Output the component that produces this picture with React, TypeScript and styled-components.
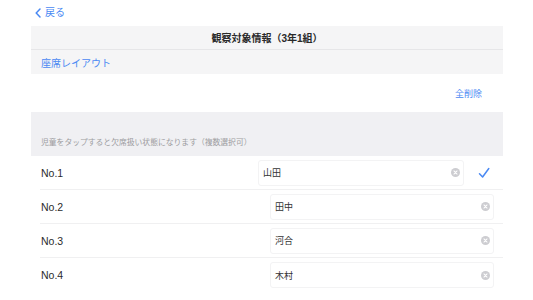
import * as React from 'react';
import styled, { createGlobalStyle } from 'styled-components';

const GlobalStyle = createGlobalStyle`
  html, body {
    margin: 0;
    padding: 0;
    background: #ffffff;
  }
  body {
    font-family: 'Liberation Sans', 'Noto Sans CJK JP', sans-serif;
    color: #2b2b2b;
  }
`;

const BLUE = '#4a89f3';

const Page = styled.div`
  width: 533px;
  height: 300px;
  overflow: hidden;
  display: flex;
  flex-direction: column;
`;

const TopBar = styled.div`
  height: 26px;
  display: flex;
  align-items: center;
  padding-left: 35px;
`;

const BackLink = styled.div`
  display: flex;
  align-items: center;
  gap: 4px;
  color: ${BLUE};
  font-size: 10px;
  line-height: 1;
`;

const Panel = styled.div`
  margin: 0 30px 0 31px;
  display: flex;
  flex-direction: column;
`;

const NavBar = styled.div`
  height: 23px;
  background: #f5f5f6;
  border-bottom: 1px solid #e6e6e8;
  display: flex;
  align-items: center;
  justify-content: center;
  font-size: 10px;
  font-weight: bold;
  color: #2a2a2a;
`;

const LayoutRow = styled.div`
  height: 24px;
  background: #f5f5f6;
  display: flex;
  align-items: center;
  padding-left: 10px;
  font-size: 10px;
  color: ${BLUE};
`;

const ActionRow = styled.div`
  height: 38px;
  display: flex;
  align-items: center;
  justify-content: flex-end;
  padding-right: 21px;
  font-size: 9px;
  color: ${BLUE};
`;

const SectionHeader = styled.div`
  height: 44px;
  background: #f0f0f3;
  display: flex;
  align-items: flex-end;
  padding: 0 0 9px 10px;
  box-sizing: border-box;
  font-size: 7.8px;
  color: #9d9da1;
`;

const Row = styled.div<{ $last?: boolean }>`
  height: 34px;
  display: flex;
  align-items: center;
  margin-left: 9px;
  border-bottom: ${(p) => (p.$last ? 'none' : '1px solid #f0f0f1')};
  box-sizing: border-box;
`;

const Label = styled.div`
  flex: 1;
  font-size: 10.5px;
  color: #2b2b2b;
  padding-left: 1px;
`;

const Field = styled.div<{ $width: number }>`
  width: ${(p) => p.$width}px;
  height: 26px;
  box-sizing: border-box;
  border: 1px solid #f3f3f4;
  border-radius: 3px;
  display: flex;
  align-items: center;
  justify-content: space-between;
  padding: 0 3px 0 4px;
  font-size: 9px;
  color: #333333;
`;

const Accessory = styled.div<{ $width: number }>`
  width: ${(p) => p.$width}px;
  display: flex;
  align-items: center;
  justify-content: center;
`;

function ClearIcon() {
  return (
    <svg width="9" height="9" viewBox="0 0 10 10">
      <circle cx="5" cy="5" r="5" fill="#cdcdd1" />
      <path d="M3.3 3.3 L6.7 6.7 M6.7 3.3 L3.3 6.7" stroke="#ffffff" strokeWidth="1.2" strokeLinecap="round" />
    </svg>
  );
}

function CheckIcon() {
  return (
    <svg width="12" height="12" viewBox="0 0 12 12">
      <path d="M1.5 6.8 L4.6 10 L10.8 1.5" fill="none" stroke={BLUE} strokeWidth="1.5" strokeLinecap="round" strokeLinejoin="round" />
    </svg>
  );
}

function Chevron() {
  return (
    <svg width="6" height="10" viewBox="0 0 6 10">
      <path d="M5 1 L1.2 5 L5 9" fill="none" stroke={BLUE} strokeWidth="1.5" strokeLinecap="round" strokeLinejoin="round" />
    </svg>
  );
}

const students = [
  { no: 'No.1', name: '山田', selected: true },
  { no: 'No.2', name: '田中', selected: false },
  { no: 'No.3', name: '河合', selected: false },
  { no: 'No.4', name: '木村', selected: false },
];

export default function App() {
  return (
    <Page>
      <GlobalStyle />
      <TopBar>
        <BackLink>
          <Chevron />
          <span>戻る</span>
        </BackLink>
      </TopBar>
      <Panel>
        <NavBar>観察対象情報（3年1組）</NavBar>
        <LayoutRow>座席レイアウト</LayoutRow>
        <ActionRow>全削除</ActionRow>
        <SectionHeader>児童をタップすると欠席扱い状態になります（複数選択可）</SectionHeader>
        {students.map((s, i) => (
          <Row key={s.no} $last={i === students.length - 1}>
            <Label>{s.no}</Label>
            <Field $width={s.selected ? 206 : 224}>
              <span>{s.name}</span>
              <ClearIcon />
            </Field>
            <Accessory $width={s.selected ? 39 : 9}>{s.selected && <CheckIcon />}</Accessory>
          </Row>
        ))}
      </Panel>
    </Page>
  );
}
